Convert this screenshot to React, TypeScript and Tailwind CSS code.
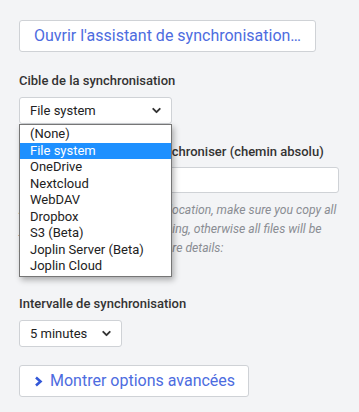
import { ChevronDown } from "lucide-react";

const targets = [
  "(None)",
  "File system",
  "OneDrive",
  "Nextcloud",
  "WebDAV",
  "Dropbox",
  "S3 (Beta)",
  "Joplin Server (Beta)",
  "Joplin Cloud",
];

function FakeSelect({ value, width }: { value: string; width: string }) {
  return (
    <div
      className={`${width} h-[27px] flex items-center justify-between bg-white border border-[#cfd2d6] rounded-[3px] pl-[10px] pr-[8px] text-[13px] text-[#222]`}
    >
      <span>{value}</span>
      <ChevronDown className="w-[13px] h-[13px] text-[#333]" strokeWidth={3.5} />
    </div>
  );
}

export default function App() {
  return (
    <div
      className="w-[359px] h-[412px] bg-[#f3f4f6] overflow-hidden px-[19px] pt-[20px] text-[#333]"
      style={{ fontFamily: "Roboto, 'Liberation Sans', sans-serif" }}
    >
      <button className="w-[297px] h-[32px] bg-white border border-[#cfd2d6] rounded-[3px] text-[16px] text-[#4d6ce0] text-center">
        Ouvrir l'assistant de synchronisation…
      </button>

      {/* Cible */}
      <div className="mt-[21px] text-[13px] font-medium text-[#333] leading-[16px]">
        Cible de la synchronisation
      </div>
      <div className="relative mt-[8px]">
        <FakeSelect value="File system" width="w-[153px]" />

        {/* native dropdown popup */}
        <div className="absolute left-0 top-[27px] z-10 w-[153px] bg-white border border-[#767676] py-[1px] shadow-[2px_3px_6px_rgba(0,0,0,0.3)]">
          {targets.map((t) => (
            <div
              key={t}
              className={`h-[16.5px] leading-[16.5px] pl-[10px] text-[13px] ${
                t === "File system" ? "bg-[#1e90ff] text-white" : "text-[#222]"
              }`}
            >
              {t}
            </div>
          ))}
        </div>

        {/* content hidden behind the popup */}
        <div className="mt-[20px] text-[13px] font-medium text-[#333] leading-[16px]">
          Répertoire avec lequel synchroniser (chemin absolu)
        </div>
        <div className="mt-[7px] w-[320px] h-[26px] bg-white border border-[#cfd2d6] rounded-[3px]" />
        <p className="mt-[8px] text-[12.2px] italic text-[#8a8d93] leading-[19px] whitespace-nowrap">
          Attention: If you change this location, make sure you copy all
          <br />
          your content to it before syncing, otherwise all files will be
          <br />
          removed! See the FAQ for more details:
        </p>
      </div>

      {/* Intervalle */}
      <div className="mt-[38px] text-[13px] font-medium text-[#333] leading-[16px]">
        Intervalle de synchronisation
      </div>
      <div className="mt-[8px]">
        <FakeSelect value="5 minutes" width="w-[103px]" />
      </div>

      <button className="mt-[18px] w-[230px] h-[32px] flex items-center bg-white border border-[#cfd2d6] rounded-[3px] pl-[14px] text-[16px] text-[#4d6ce0]">
        <svg width="9" height="11" viewBox="0 0 9 11" className="mr-[7px]">
          <path d="M2 1.5 L6.5 5.5 L2 9.5" fill="none" stroke="#3358d8" strokeWidth="2.6" />
        </svg>
        Montrer options avancées
      </button>
    </div>
  );
}
